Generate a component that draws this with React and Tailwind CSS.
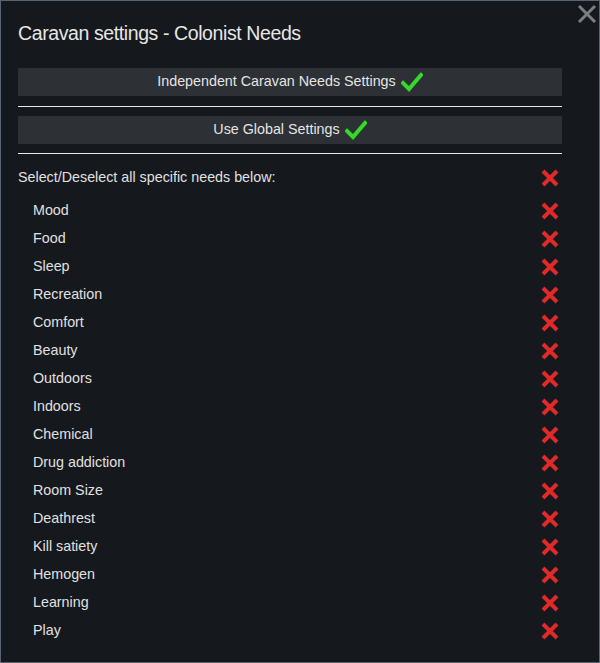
import React from 'react';

const needs = [
  'Mood', 'Food', 'Sleep', 'Recreation', 'Comfort', 'Beauty', 'Outdoors', 'Indoors',
  'Chemical', 'Drug addiction', 'Room Size', 'Deathrest', 'Kill satiety', 'Hemogen',
  'Learning', 'Play',
];

const Check = () => (
  <svg width="22" height="20" viewBox="0 0 22 20" className="ml-[5px]">
    <path d="M2 11 L8 17 L20 3" fill="none" stroke="#35d92a" strokeWidth="4" strokeLinecap="square" />
  </svg>
);

const Cross = () => (
  <svg width="20" height="20" viewBox="0 0 20 20">
    <path d="M3 3 L17 17 M17 3 L3 17" fill="none" stroke="#e02a2a" strokeWidth="4" />
  </svg>
);

const Button = ({ label }) => (
  <div className="h-[28px] bg-[#2d3035] flex items-center justify-center text-[14.3px] text-[#e4e4e4]">
    <span>{label}</span>
    <Check />
  </div>
);

const App = () => {
  return (
    <div
      className="relative w-[600px] h-[663px] border border-[#5a6370] bg-[#15181d] pl-[17px] pr-[37px] pt-[20px]"
      style={{ fontFamily: '"Liberation Sans", Arial, sans-serif' }}
    >
      <svg width="20" height="20" viewBox="0 0 20 20" className="absolute top-[3px] right-[2px]">
        <path d="M2 2 L18 18 M18 2 L2 18" fill="none" stroke="#7b7e82" strokeWidth="3" />
      </svg>

      <h1 className="text-[19.5px] tracking-[-0.4px] leading-[24px] text-[#e6e6e6]">Caravan settings - Colonist Needs</h1>

      <div className="mt-[23px]">
        <Button label="Independent Caravan Needs Settings" />
      </div>
      <div className="mt-[10px] h-px bg-[#e8e8e8]" />
      <div className="mt-[9px]">
        <Button label="Use Global Settings" />
      </div>
      <div className="mt-[9px] h-px bg-[#e8e8e8]" />

      <div className="mt-[10px] h-[28px] flex items-center justify-between text-[14.3px] text-[#e0e0e0] pr-[2px]">
        <span>Select/Deselect all specific needs below:</span>
        <Cross />
      </div>

      <div className="mt-[5px] flex flex-col">
        {needs.map((n) => (
          <div key={n} className="h-[28px] flex items-center justify-between pl-[15px] pr-[2px] text-[14.3px] text-[#e0e0e0]">
            <span>{n}</span>
            <Cross />
          </div>
        ))}
      </div>
    </div>
  );
};

export default App;
